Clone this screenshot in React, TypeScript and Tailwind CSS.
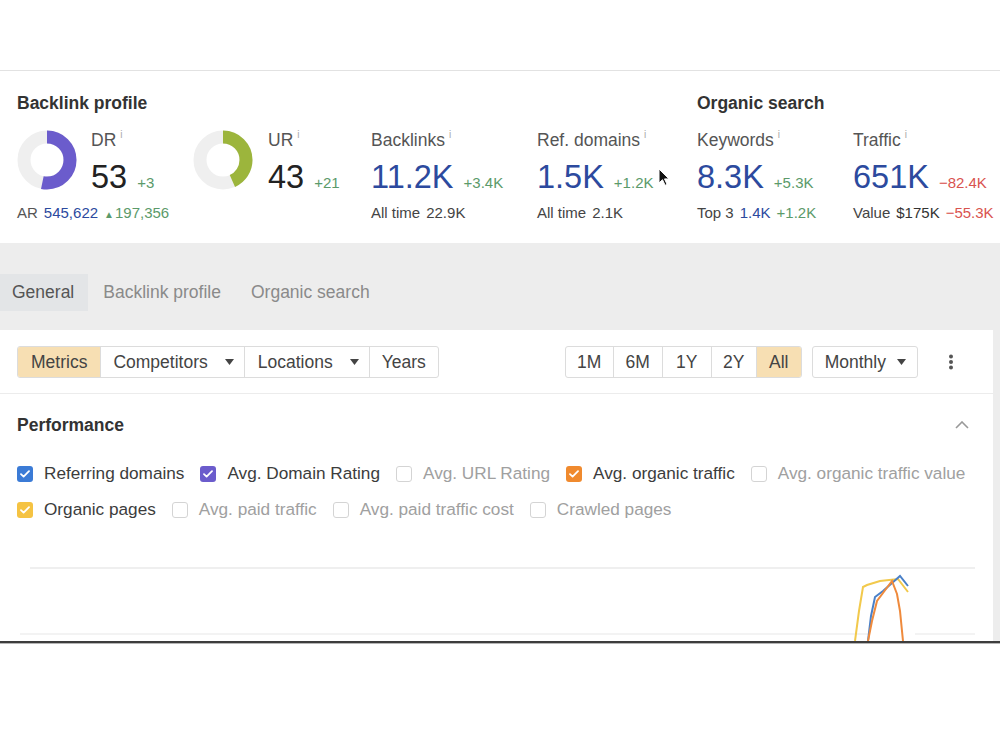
import { ReactNode } from "react";

type Check = { label: string; color?: string };

const checksTop: Check[] = [
  { label: "Referring domains", color: "#3b7bd6" },
  { label: "Avg. Domain Rating", color: "#6b5ccc" },
  { label: "Avg. URL Rating" },
  { label: "Avg. organic traffic", color: "#f08a2e" },
  { label: "Avg. organic traffic value" },
];

const checksBottom: Check[] = [
  { label: "Organic pages", color: "#f5c343" },
  { label: "Avg. paid traffic" },
  { label: "Avg. paid traffic cost" },
  { label: "Crawled pages" },
];

const ranges = [
  { label: "1M", w: "w-[47px]" },
  { label: "6M", w: "w-[49px]" },
  { label: "1Y", w: "w-[49px]" },
  { label: "2Y", w: "w-[45px]" },
  { label: "All", w: "w-[45px]", active: true },
];

function Donut({ pct, color }: { pct: number; color: string }) {
  const r = 23;
  const c = 2 * Math.PI * r;
  return (
    <svg width="60" height="60" viewBox="0 0 60 60" className="shrink-0">
      <circle cx="30" cy="30" r={r} fill="none" stroke="#efefef" strokeWidth="13" />
      <circle
        cx="30"
        cy="30"
        r={r}
        fill="none"
        stroke={color}
        strokeWidth="13"
        strokeDasharray={`${c * pct} ${c}`}
        transform="rotate(-90 30 30)"
      />
    </svg>
  );
}

function Label({ children }: { children: ReactNode }) {
  return (
    <div className="flex h-5 items-start text-[17.5px] leading-5 text-[#555]">
      {children}
      <span className="ml-[4px] text-[10px] leading-[10px] text-[#aaa]">i</span>
    </div>
  );
}

function BigValue({ value, delta, blue, red }: { value: string; delta: string; blue?: boolean; red?: boolean }) {
  return (
    <div className="mt-[9px] flex items-baseline gap-[10px]">
      <span className={`text-[32.5px] leading-[36px] ${blue ? "text-[#2c4a9e]" : "text-[#222]"}`}>{value}</span>
      <span className={`text-[15px] ${red ? "text-[#d9534f]" : "text-[#5b9a6a]"}`}>{delta}</span>
    </div>
  );
}

function Caret() {
  return (
    <svg width="9" height="6" viewBox="0 0 9 6" className="shrink-0">
      <path d="M0 0h9L4.5 6z" fill="#444" />
    </svg>
  );
}

function CheckItem({ item }: { item: Check }) {
  const on = !!item.color;
  return (
    <div className="flex items-center gap-[11px]">
      {on ? (
        <span
          className="flex size-4 items-center justify-center rounded-[3px]"
          style={{ backgroundColor: item.color }}
        >
          <svg width="10" height="8" viewBox="0 0 10 8">
            <path d="M1 4.2l2.6 2.4L9 1.2" fill="none" stroke="#fff" strokeWidth="1.8" strokeLinecap="round" strokeLinejoin="round" />
          </svg>
        </span>
      ) : (
        <span className="size-4 rounded-[3px] border border-[#d4d4d4] bg-white" />
      )}
      <span className={on ? "text-[#3c3c3c]" : "text-[#a0a0a0]"}>{item.label}</span>
    </div>
  );
}

export default function App() {
  return (
    <div className="h-[750px] w-[1000px] overflow-hidden bg-white font-['Liberation_Sans',Arial,sans-serif] whitespace-nowrap">
      <div className="h-[71px] border-b border-[#e2e2e2]" />

      {/* top metrics */}
      <div className="relative flex px-[17px] pt-[22px] pb-[20px]">
        <div className="w-[680px] shrink-0">
          <h2 className="h-5 text-[17.5px] leading-5 font-bold text-[#333]">Backlink profile</h2>
          <div className="mt-[17px] flex">
            <div className="w-[176px] shrink-0">
              <div className="flex gap-[14px]">
                <Donut pct={0.53} color="#6b5ccc" />
                <div>
                  <Label>DR</Label>
                  <BigValue value="53" delta="+3" />
                </div>
              </div>
              <div className="mt-[8px] flex h-5 items-center gap-[6px] text-[15px]">
                <span className="text-[#555]">AR</span>
                <span className="text-[#2c4a9e]">545,622</span>
                <span className="text-[#5b9a6a]">
                  <span className="mr-[1px] text-[10px]">▲</span>197,356
                </span>
              </div>
            </div>
            <div className="w-[178px] shrink-0">
              <div className="flex gap-[15px]">
                <Donut pct={0.43} color="#9cb53c" />
                <div>
                  <Label>UR</Label>
                  <BigValue value="43" delta="+21" />
                </div>
              </div>
            </div>
            <div className="w-[166px] shrink-0">
              <Label>Backlinks</Label>
              <BigValue value="11.2K" delta="+3.4K" blue />
              <div className="mt-[8px] flex h-5 items-center gap-[6px] text-[15px] text-[#444]">
                <span>All time</span>
                <span>22.9K</span>
              </div>
            </div>
            <div className="w-[160px] shrink-0">
              <Label>Ref. domains</Label>
              <BigValue value="1.5K" delta="+1.2K" blue />
              <div className="mt-[8px] flex h-5 items-center gap-[6px] text-[15px] text-[#444]">
                <span>All time</span>
                <span>2.1K</span>
              </div>
            </div>
          </div>
        </div>
        <div className="shrink-0">
          <h2 className="h-5 text-[17.5px] leading-5 font-bold text-[#333]">Organic search</h2>
          <div className="mt-[17px] flex">
            <div className="w-[156px] shrink-0">
              <Label>Keywords</Label>
              <BigValue value="8.3K" delta="+5.3K" blue />
              <div className="mt-[8px] flex h-5 items-center gap-[6px] text-[15px]">
                <span className="text-[#444]">Top 3</span>
                <span className="text-[#2c4a9e]">1.4K</span>
                <span className="text-[#5b9a6a]">+1.2K</span>
              </div>
            </div>
            <div className="shrink-0">
              <Label>Traffic</Label>
              <BigValue value="651K" delta="−82.4K" blue red />
              <div className="mt-[8px] flex h-5 items-center gap-[6px] text-[15px]">
                <span className="text-[#444]">Value</span>
                <span className="text-[#333]">$175K</span>
                <span className="text-[#d9534f]">−55.3K</span>
              </div>
            </div>
          </div>
        </div>

        {/* mouse pointer */}
        <svg width="12" height="19" viewBox="0 0 12 19" className="absolute top-[97px] left-[658px]">
          <path d="M1 1v14l3.5-3.3 2.6 5.6 2-0.9-2.6-5.5H11z" fill="#111" stroke="#fff" strokeWidth="1" />
        </svg>
      </div>

      {/* grey area */}
      <div className="bg-[#ededed]">
        <div className="flex items-end pt-[31px] pb-[19px] text-[17.5px]">
          <div className="flex h-[37px] items-center bg-[#e3e5e7] pr-[14px] pl-[12px] text-[#555]">General</div>
          <div className="flex h-[37px] items-center px-[15px] text-[#8a8a8a]">Backlink profile</div>
          <div className="flex h-[37px] items-center px-[15px] text-[#8a8a8a]">Organic search</div>
        </div>

        <div className="mr-[7px] bg-white">
          {/* toolbar */}
          <div className="flex items-center justify-between border-b border-[#ececec] px-[17px] pt-[16px] pb-[15px] text-[17.5px] text-[#444]">
            <div className="flex h-[32px] overflow-hidden rounded-[3px] border border-[#dcdcdc]">
              <div className="flex items-center bg-[#f7dfb3] px-[13px]">Metrics</div>
              <div className="flex items-center gap-[17px] border-l border-[#dcdcdc] pr-[10px] pl-[12px]">
                Competitors <Caret />
              </div>
              <div className="flex items-center gap-[17px] border-l border-[#dcdcdc] pr-[10px] pl-[13px]">
                Locations <Caret />
              </div>
              <div className="flex items-center border-l border-[#dcdcdc] px-[12px]">Years</div>
            </div>
            <div className="flex items-center">
              <div className="flex h-[32px] overflow-hidden rounded-[3px] border border-[#dcdcdc]">
                {ranges.map((r, i) => (
                  <div
                    key={r.label}
                    className={`flex items-center justify-center ${r.w} ${i > 0 ? "border-l border-[#dcdcdc]" : ""} ${
                      r.active ? "bg-[#f7dfb3]" : ""
                    }`}
                  >
                    {r.label}
                  </div>
                ))}
              </div>
              <div className="ml-[10px] flex h-[32px] items-center gap-[11px] rounded-[3px] border border-[#dcdcdc] pr-[11px] pl-[12px]">
                Monthly <Caret />
              </div>
              <svg width="6" height="16" viewBox="0 0 6 16" className="mr-[22px] ml-[30px]">
                <circle cx="3" cy="2.5" r="2" fill="#555" />
                <circle cx="3" cy="8" r="2" fill="#555" />
                <circle cx="3" cy="13.5" r="2" fill="#555" />
              </svg>
            </div>
          </div>

          {/* performance */}
          <div className="px-[17px] pt-[21px]">
            <div className="flex items-center justify-between">
              <h3 className="h-5 text-[17.5px] leading-5 font-bold text-[#333]">Performance</h3>
              <svg width="14" height="8" viewBox="0 0 14 8" className="mr-[7px]">
                <path d="M1 7l6-6 6 6" fill="none" stroke="#999" strokeWidth="1.6" />
              </svg>
            </div>
            <div className="mt-[27px] flex h-6 items-center gap-4 text-[17.2px]">
              {checksTop.map((c) => (
                <CheckItem key={c.label} item={c} />
              ))}
            </div>
            <div className="mt-[12px] flex h-6 items-center gap-4 text-[17.2px]">
              {checksBottom.map((c) => (
                <CheckItem key={c.label} item={c} />
              ))}
            </div>
          </div>

          {/* chart */}
          <svg width="993" height="119" viewBox="0 1 993 119" className="block">
            <line x1="30" y1="47" x2="975" y2="47" stroke="#efefef" strokeWidth="2" />
            <line x1="20" y1="113" x2="870" y2="113" stroke="#efefef" strokeWidth="1.5" />
            <line x1="915" y1="113" x2="975" y2="113" stroke="#efefef" strokeWidth="1.5" />
            <polyline
              points="855,120 859,90 863,66 867,64 880,60 898,58 908,71"
              fill="none"
              stroke="#f2c94c"
              strokeWidth="2"
            />
            <polyline
              points="868,120 871,95 875,76 883,70 900,55 908,65"
              fill="none"
              stroke="#4a80c8"
              strokeWidth="2"
            />
            <polyline
              points="868,120 872,100 877,80 892,60 897,73 900,90 903,120"
              fill="none"
              stroke="#ef8a3c"
              strokeWidth="2"
            />
          </svg>
        </div>
      </div>
      <div className="h-[2px] bg-[#3d3d3d]" />
      <div className="h-px bg-[#b5b5b5]" />
    </div>
  );
}
